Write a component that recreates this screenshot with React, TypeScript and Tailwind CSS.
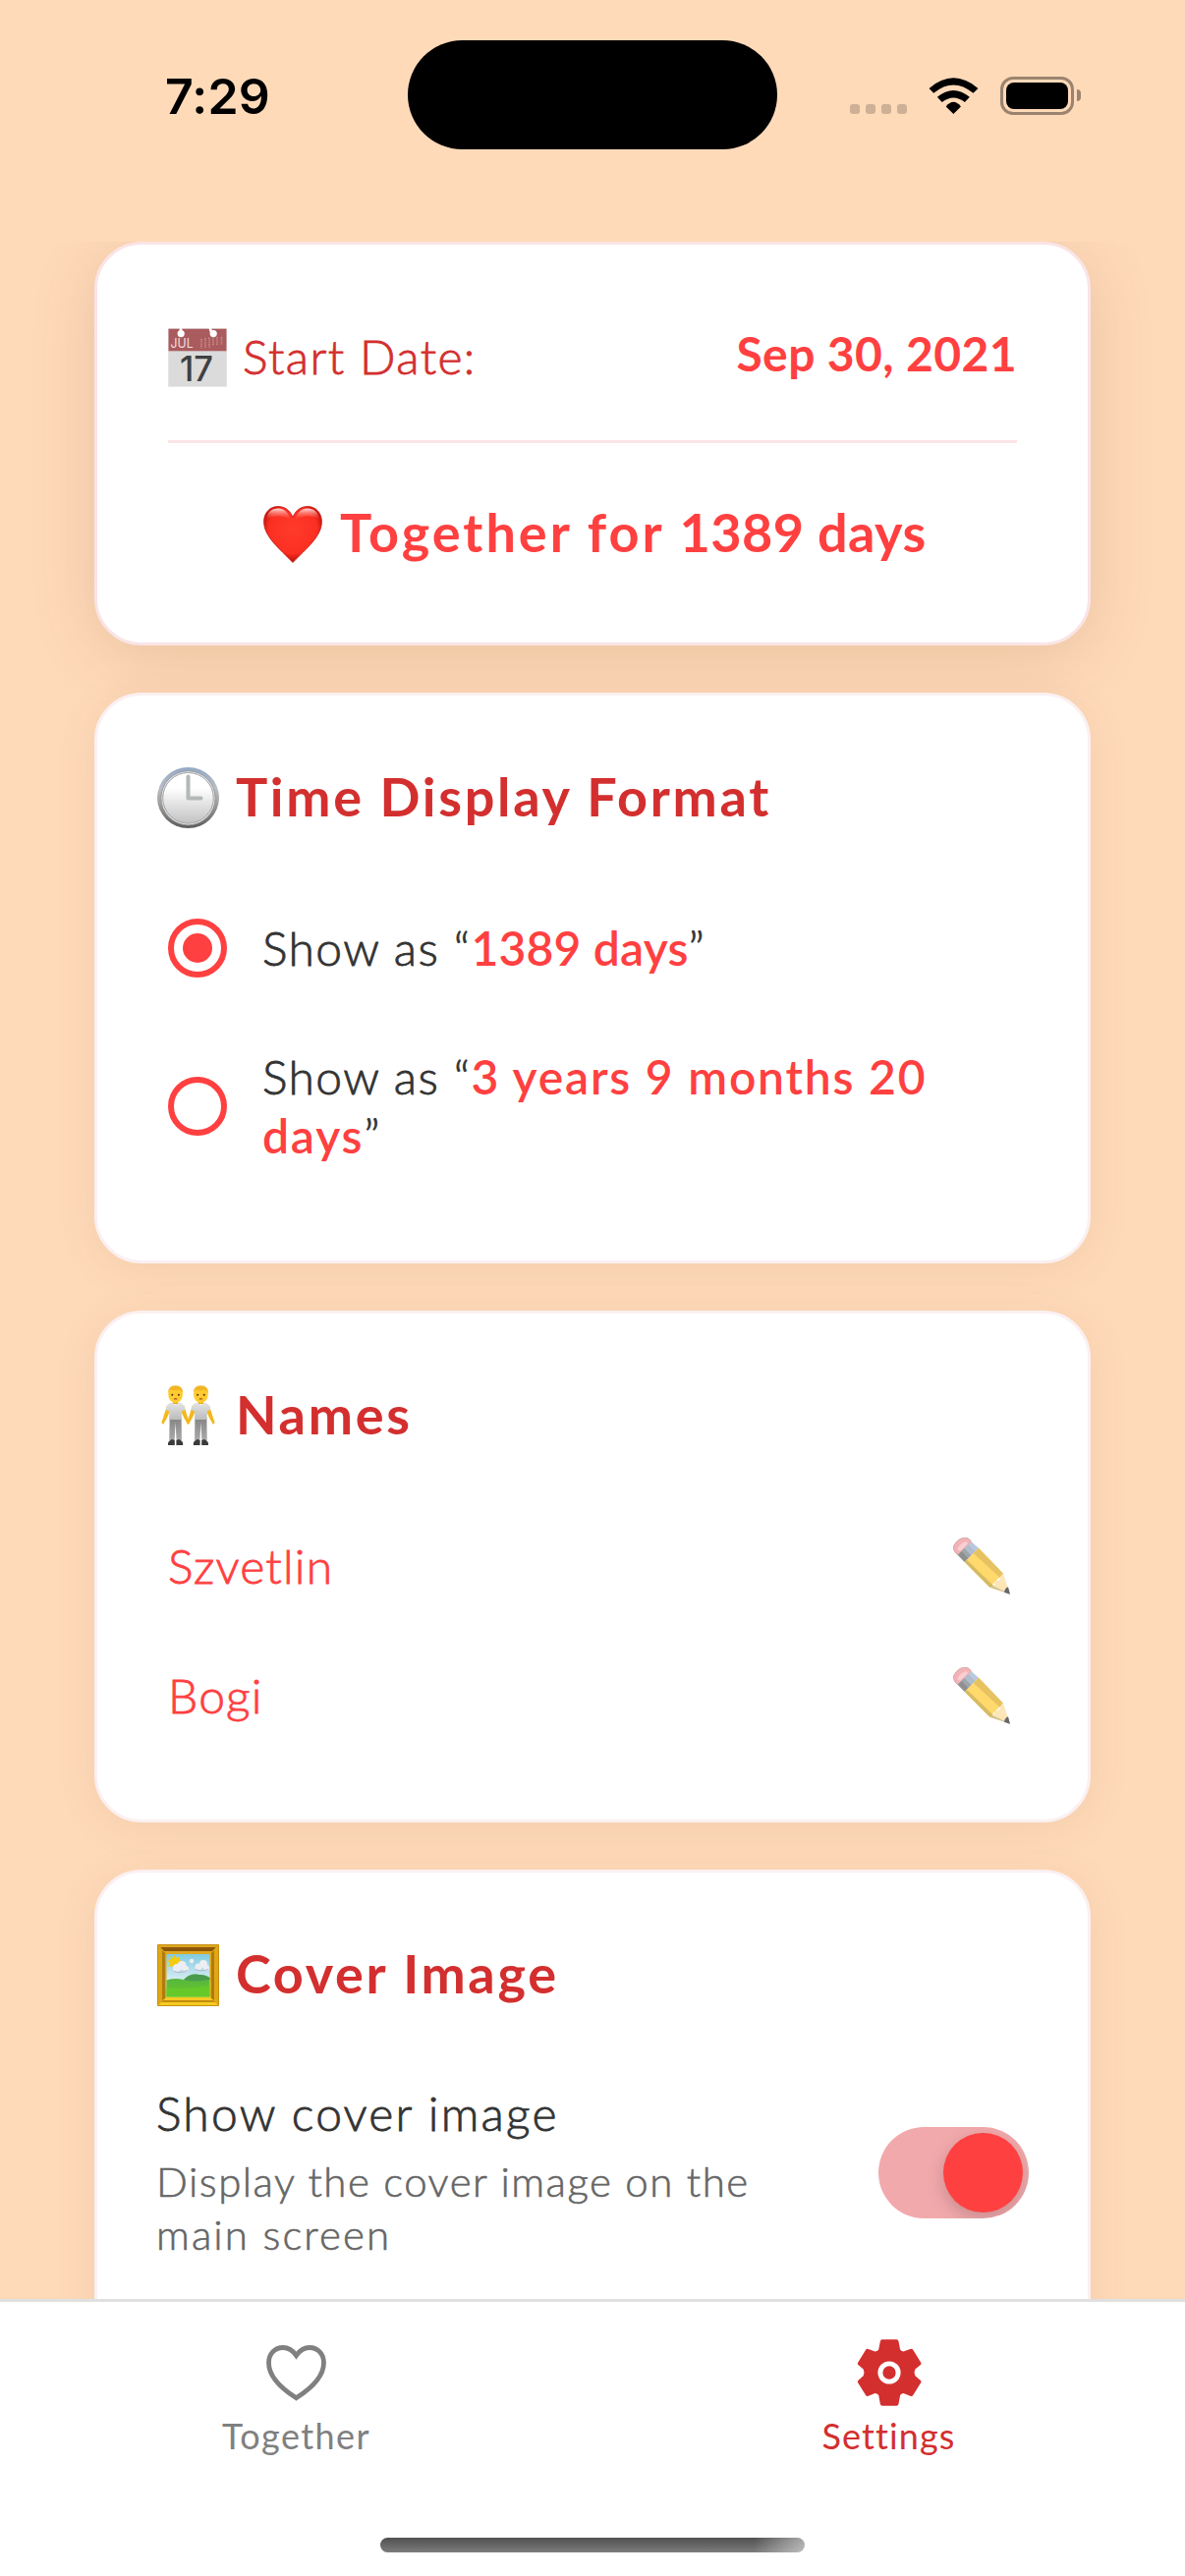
import type { ReactNode } from "react";

function CalendarIcon() {
  return (
    <svg viewBox="0 0 60 60" className="h-[60px] w-[60px] shrink-0">
      <rect width="60" height="60" fill="#e9e9e9" />
      <rect x="0.7" y="23" width="58.6" height="36" fill="#dbdbdb" />
      <rect x="0.5" y="0.7" width="59" height="22.6" fill="#aa5b5d" />
      <path d="M13 0V5M43 0Q43 4 46 5" stroke="#fff" strokeWidth="2.6" fill="none" />
      <circle cx="13.2" cy="5.6" r="3.6" fill="#fff" />
      <circle cx="46.2" cy="5.6" r="3.6" fill="#fff" />
      <path d="M34 11v9.5M38 10v10M42 9.5v10M46 9v9M50 9v8.5M54.500 9v7.500" stroke="#c98f90" strokeWidth="1.6" strokeDasharray="1.4 0.8" />
      <text x="2.600" y="20.300" fontFamily="Inter, sans-serif" fontSize="13.400" fontWeight="400" fill="#f3dede" textLength="23" lengthAdjust="spacingAndGlyphs">JUL</text>
      <text x="12" y="53.500" fontFamily="Inter, sans-serif" fontSize="35" fontWeight="500" fill="#3f4041" textLength="34" lengthAdjust="spacingAndGlyphs">17</text>
    </svg>
  );
}

function RedHeartIcon() {
  return (
    <svg viewBox="0 0 60 58" className="h-[58px] w-[60px] shrink-0">
      <defs>
        <radialGradient id="heartBody" cx="0.5" cy="0.42" r="0.58">
          <stop offset="0" stopColor="#ff3b2c" />
          <stop offset="0.72" stopColor="#fb2f22" />
          <stop offset="1" stopColor="#b80d08" />
        </radialGradient>
        <linearGradient id="heartShine" x1="0" y1="0" x2="0" y2="1">
          <stop offset="0" stopColor="#fff" stopOpacity="0.85" />
          <stop offset="1" stopColor="#ff6a5c" stopOpacity="0" />
        </linearGradient>
      </defs>
      <path d="M30 11.500C27 4 21.500 0.500 15 0.500C6.500 0.500 0.600 7 0.600 16C0.600 31 16 43 30 57.500C44 43 59.400 31 59.400 16C59.400 7 53.500 0.500 45 0.500C38.500 0.500 33 4 30 11.500Z" fill="url(#heartBody)" stroke="#c0150e" strokeWidth="0.8" />
      <path d="M15 2.500C8.500 2.500 4 6.500 3.500 13Q15 7 27.500 14C25.500 6.500 21.500 2.500 15 2.500ZM45 2.500C51.500 2.500 56 6.500 56.500 13Q45 7 32.500 14C34.500 6.500 38.500 2.500 45 2.500Z" fill="url(#heartShine)" />
    </svg>
  );
}

function ClockIcon() {
  return (
    <svg viewBox="0 0 63 62" className="h-[62px] w-[63px] shrink-0">
      <defs>
        <linearGradient id="clockRim" x1="0" y1="0" x2="0" y2="1">
          <stop offset="0" stopColor="#94a8c6" />
          <stop offset="0.35" stopColor="#b9bec6" />
          <stop offset="0.6" stopColor="#a39c96" />
          <stop offset="1" stopColor="#5c5c5c" />
        </linearGradient>
        <linearGradient id="clockFace" x1="0" y1="0" x2="0" y2="1">
          <stop offset="0.3" stopColor="#fff" />
          <stop offset="1" stopColor="#c2c2c2" />
        </linearGradient>
      </defs>
      <ellipse cx="31.500" cy="31" rx="31.500" ry="31" fill="url(#clockRim)" />
      <circle cx="31.500" cy="31.300" r="27.600" fill="#e4e4e4" stroke="#8b9097" strokeWidth="0.8" />
      <circle cx="31.500" cy="31.300" r="25.800" fill="url(#clockFace)" stroke="#a2a4a8" strokeWidth="1" />
      <path d="M31.500 9.500V31.500H44.500" fill="none" stroke="#b4b8b8" strokeWidth="4" strokeLinecap="round" strokeLinejoin="round" />
    </svg>
  );
}

function Person() {
  return (
    <g>
      <path d="M-8.500 20Q-10.500 27 -14.200 38L-12.500 40Q-8 33 -5.500 26ZM8.500 20Q10.500 27 14.200 38L12.500 40Q8 33 5.500 26Z" fill="#f4b81c" />
      <path d="M-6 33H6L6.300 56H1L0 38L-1 56H-6.300Z" fill="url(#trousers)" />
      <path d="M-7.500 61Q-8.500 57 -3.500 55L-0.800 56V61ZM7.500 61Q8.500 57 3.500 55L0.800 56V61Z" fill="#3b3b3b" />
      <path d="M-4 17.500Q-9.500 19 -10 25L-6.300 26.500V35H6.300V26.500L10 25Q9.500 19 4 17.500L0 20Z" fill="url(#shirt)" />
      <rect x="-2.500" y="14" width="5" height="5" fill="#eba915" />
      <ellipse cx="0" cy="9.500" rx="7.300" ry="8.500" fill="#ffcb2e" />
      <path d="M-7.700 9Q-8 0.200 0 0.200Q8 0.200 7.700 9Q6.500 5 3 4.700Q-2 6 -5.500 4.500Q-7 6 -7.700 9Z" fill="#f2b525" />
      <circle cx="-3.300" cy="9.700" r="1" fill="#4d3215" />
      <circle cx="3.300" cy="9.700" r="1" fill="#4d3215" />
      <path d="M-1.500 14.300Q0 12.900 1.500 14.300" stroke="#a8501c" strokeWidth="1.100" fill="none" />
    </g>
  );
}

function PeopleIcon() {
  return (
    <svg viewBox="0 0 55 62" className="mx-1 h-[62px] w-[55px] shrink-0">
      <defs>
        <linearGradient id="trousers" x1="0" y1="0" x2="0" y2="1">
          <stop offset="0" stopColor="#858585" />
          <stop offset="1" stopColor="#a9a9a9" />
        </linearGradient>
        <linearGradient id="shirt" x1="0" y1="0" x2="0" y2="1">
          <stop offset="0" stopColor="#e4e4e4" />
          <stop offset="1" stopColor="#bcbcbc" />
        </linearGradient>
      </defs>
      <g transform="translate(14.600 0)"><Person /></g>
      <g transform="translate(40.400 0)"><Person /></g>
    </svg>
  );
}

function PencilIcon() {
  return (
    <svg viewBox="0 0 174 174" className="h-[58px] w-[58px] shrink-0">
      <path d="M14 53Q-4 38 3 23Q14 4 34 0Q48 -1 56 13Z" fill="#f3b3b6" stroke="#bd9597" strokeWidth="2" />
      <path d="M14 33Q22 18 38 12Q46 14 44 20L22 41Q14 41 14 33Z" fill="#f9ced0" />
      <path d="M14 53L35 33L56 54L35 75Z" fill="#8f8f8f" />
      <path d="M35 33L56 13L78 32L56 54Z" fill="#b9c9dd" />
      <path d="M26 42L46 22L67 42L46 64Z" fill="#a9b4c0" opacity="0.6" />
      <path d="M35 75L78 32L153 110L128 135L112 152Z" fill="#ffd96b" />
      <path d="M62 48L78 32L153 110L143 122Z" fill="#e6c262" />
      <path d="M35 75L42 68L124 148L112 152Z" fill="#d6bb64" />
      <path d="M112 152Q124 151 126 142Q126 133 133 132Q146 130 145 121Q147 111 153 110L174 173Z" fill="#fce6b8" />
      <path d="M112 152L122 148L160 166L174 173Z" fill="#d3c092" />
      <path d="M168 151L174 173L156 167Q158 155 168 151Z" fill="#63686e" />
    </svg>
  );
}

function FrameIcon() {
  return (
    <svg viewBox="0 0 63 63" className="h-[63px] w-[63px] shrink-0">
      <defs>
        <linearGradient id="sky" x1="0" y1="0" x2="0" y2="1">
          <stop offset="0" stopColor="#7fcbe0" />
          <stop offset="0.7" stopColor="#e6f2f6" />
        </linearGradient>
        <linearGradient id="hill" x1="0" y1="0" x2="0" y2="1">
          <stop offset="0" stopColor="#52b548" />
          <stop offset="1" stopColor="#68c524" />
        </linearGradient>
      </defs>
      <rect width="63" height="63" rx="1" fill="#c9900f" />
      <path d="M1 1H62L53 10H10Z" fill="#dfa81e" />
      <path d="M3 3H60L56 7H7Z" fill="#8b560b" />
      <path d="M1 1L10 10V53L1 62Z" fill="#dda617" />
      <path d="M62 1L53 10V53L62 62Z" fill="#e0a716" />
      <path d="M1 62L10 53H53L62 62Z" fill="#f7cb22" />
      <path d="M4 59L6 57H57L59 59Z" fill="#c18c0e" />
      <path d="M5 6L8 9V55L5 57ZM58 6L55 9V55L58 57Z" fill="#a26b0c" opacity="0.75" />
      <rect x="9.500" y="10" width="44" height="43.500" fill="url(#sky)" />
      <path d="M17.500 11L19.500 14L23 12L23 16L26 18L23 20L23 24L19 22L17 25L15 22L11 23L13 19L10.500 17L14 15L13 12L16 14Z" fill="#f4cb0d" />
      <g fill="#eceef3">
        <circle cx="20" cy="24" r="4" />
        <circle cx="25" cy="21.500" r="4.500" />
        <circle cx="29" cy="25" r="3" />
        <circle cx="42" cy="23" r="3.500" />
        <circle cx="47" cy="20" r="4" />
        <circle cx="50" cy="24" r="3" />
        <circle cx="35" cy="17" r="2.300" />
      </g>
      <path d="M17 27.500Q24 30 31 26.500M39 25.500Q45 28 52 25.500" stroke="#b7bccb" strokeWidth="1.200" fill="none" />
      <path d="M9.500 36.500Q18 34 27 36Q34 29 43 31Q49 31 53.500 34V53.500H9.500Z" fill="url(#hill)" />
      <path d="M27 36Q35 39 53.500 36V34Q49 31 43 31Q34 29 27 36Z" fill="#4a9c4d" />
      <path d="M9.500 44Q25 47 53.500 42V53.500H9.500Z" fill="#67c929" />
    </svg>
  );
}

function GearIcon() {
  return (
    <svg viewBox="34 31 199 205" className="h-[68px] w-[66px]">
      <path fill="#d32f2f" d="M112 32H156Q161 32 162 37L167 63Q169 68 177 69L198 61Q204 59 207 64L231 103Q233 107 229 110L213 123Q208 133 213 143L229 157Q233 160 231 164L207 202Q204 207 198 205L177 197Q169 198 167 203L162 230Q161 235 156 235H112Q107 235 106 230L101 203Q99 198 90 197L69 205Q64 207 61 202L37 164Q35 160 39 157L54 143Q59 133 54 123L39 110Q35 107 37 103L61 64Q64 59 69 61L90 69Q99 68 101 63L106 37Q107 32 112 32Z" />
      <circle cx="133.500" cy="133.500" r="27.500" fill="none" stroke="#fff" strokeWidth="15" />
    </svg>
  );
}

function HeartOutlineIcon() {
  return (
    <svg viewBox="0 0 61 57" className="h-[57px] w-[61px]" fill="none" stroke="#808080" strokeWidth="4.800" strokeLinejoin="miter">
      <path d="M30.500 10.500C27 5.500 22 2.500 17 2.500C8.500 2.500 2.500 9 2.500 18C2.500 31 12 42 30.500 53.800C49 42 58.500 31 58.500 18C58.500 9 52.500 2.500 44 2.500C39 2.500 34 5.500 30.500 10.500Z" />
    </svg>
  );
}

function StatusBar() {
  return (
    <header className="flex h-[246px] shrink-0 items-start">
      <div className="w-[415px] pt-[68px] pl-[168px] font-[Inter,sans-serif] text-[50px] leading-[60px] font-semibold tracking-[0.2px] text-black">7:29</div>
      <div className="mt-[41px] h-[111px] w-[376px] rounded-full bg-black" />
      <div className="mt-[78px] ml-[74px] flex h-[39px] items-start">
        <div className="mt-7 flex gap-1.5">
          {[0, 1, 2, 3].map((dot) => (
            <span key={dot} className="h-2.5 w-2.5 rounded-[3px] bg-[#cdb096]" />
          ))}
        </div>
        <svg viewBox="286 56 151 112" className="mt-px ml-[22px] h-[37px] w-[51px]">
          <path d="M286 89Q361 25 437 89L422 104Q361 53 300 104Z" />
          <path d="M311 116Q361 74 411 116L396 132Q361 104 326 132Z" />
          <path d="M338 145Q361 117 384 145L361 168Z" />
        </svg>
        <div className="ml-[22px] h-[39px] w-[75px] rounded-[13px] border-[3px] border-[#9b846f] p-[3px]">
          <div className="h-full w-full rounded-[8px] bg-black" />
        </div>
        <div className="mt-[13px] ml-[3px] h-3 w-1 rounded-r-full bg-[#9b846f]" />
      </div>
    </header>
  );
}

function Card({ title, icon, size, children }: { title: string; icon: ReactNode; size: string; children: ReactNode }) {
  return (
    <section className={`shrink-0 rounded-[48px] border-[3px] border-[#fbf0f1] bg-white px-[61px] pt-[70px] shadow-[0_6px_44px_rgba(90,50,0,0.08)] ${size}`}>
      <div className="flex h-[66px] items-start">
        <div className="mt-[3px] flex">{icon}</div>
        <h2 className="ml-[17px] text-[54px] leading-[66px] font-bold tracking-[2.7px] whitespace-nowrap text-[#d32f2f]">{title}</h2>
      </div>
      {children}
    </section>
  );
}

function Radio({ checked }: { checked?: boolean }) {
  return (
    <span className="flex h-[60px] w-[60px] shrink-0 items-center justify-center rounded-full border-[6px] border-[#ff4040]">
      {checked && <span className="h-[30px] w-[30px] rounded-full bg-[#ff4040]" />}
    </span>
  );
}

function NameRow({ name }: { name: string }) {
  return (
    <div className="flex h-[60px] items-start justify-between pr-[18px] pl-[11px]">
      <span className="text-[48px] leading-[60px] font-light tracking-[1.200px] text-[#ff4040] [-webkit-text-stroke:0.8px]">{name}</span>
      <span className="mt-px"><PencilIcon /></span>
    </div>
  );
}

export default function App() {
  return (
    <div className="flex h-[2622px] w-[1206px] flex-col overflow-hidden bg-[#ffdab9] font-[Lato,sans-serif]">
      <StatusBar />

      <main className="flex min-h-0 flex-1 flex-col gap-12 overflow-hidden px-24">
        <section className="h-[411px] shrink-0 rounded-[48px] border-[3px] border-[#fae4e6] bg-white px-[72px] shadow-[0_12px_68px_rgba(90,50,0,0.14)]">
          <div className="flex h-[202px] items-start justify-between border-b-[3px] border-[#fae4e6] pt-[81px]">
            <div className="flex items-start">
              <div className="mt-1 flex"><CalendarIcon /></div>
              <span className="mt-[3px] ml-4 text-[48px] leading-[60px] font-light tracking-[1.400px] text-[#d32f2f] [-webkit-text-stroke:0.8px]">Start Date:</span>
            </div>
            <span className="text-[48px] leading-[60px] font-bold tracking-[0.4px] text-[#ff4040]">Sep 30, 2021</span>
          </div>
          <div className="flex items-start pt-[58px] pl-[97px]">
            <div className="mt-1.5 flex"><RedHeartIcon /></div>
            <p className="ml-[18px] text-[54px] leading-[66px] font-bold whitespace-nowrap text-[#ff4040]">
              <span className="tracking-[3px]">Together for </span>
              <span className="tracking-[0.4px]">1389 days</span>
            </p>
          </div>
        </section>

        <Card title="Time Display Format" icon={<ClockIcon />} size="h-[581px]">
          <div className="mt-[91px] flex items-center pl-[11px]">
            <Radio checked />
            <p className="ml-[36px] text-[48px] leading-[60px] font-light whitespace-nowrap text-[#333]">
              <span className="tracking-[1.400px] [-webkit-text-stroke:0.8px]">Show as “</span>
              <span className="font-semibold tracking-[0.2px] text-[#ff4040]">1389 days</span>
              <span className="[-webkit-text-stroke:0.8px]">”</span>
            </p>
          </div>
          <div className="mt-[71px] flex items-center pl-[11px]">
            <Radio />
            <p className="ml-[36px] text-[48px] leading-[60px] font-light whitespace-nowrap text-[#333]">
              <span className="tracking-[1.400px] [-webkit-text-stroke:0.8px]">Show as “</span>
              <span className="font-semibold tracking-[1.800px] text-[#ff4040]">3 years 9 months 20<br />days</span>
              <span className="[-webkit-text-stroke:0.8px]">”</span>
            </p>
          </div>
        </Card>

        <Card title="Names" icon={<PeopleIcon />} size="h-[521px]">
          <div className="mt-[91px] flex flex-col gap-[72px]">
            <NameRow name="Szvetlin" />
            <NameRow name="Bogi" />
          </div>
        </Card>

        <Card title="Cover Image" icon={<FrameIcon />} size="h-[560px]">
          <div className="mt-[79px] flex items-center justify-between">
            <div className="text-[#333] [-webkit-text-stroke:0.8px]">
              <p className="-ml-px text-[48px] leading-[60px] font-light tracking-[2.200px]">Show cover image</p>
              <p className="-ml-px mt-3 text-[42px] leading-[54px] font-light tracking-[1.500px] text-[#666] [-webkit-text-stroke:0.6px]">
                Display the cover image on the
                <br />
                <span className="tracking-[2.100px]">main screen</span>
              </p>
            </div>
            <div className="-mr-px flex h-[93px] w-[153px] items-center justify-end overflow-hidden rounded-full bg-[#f2a9ac] pr-1.5">
              <span className="h-[81px] w-[81px] rounded-full bg-[#ff4040] shadow-[0_6px_18px_rgba(0,0,0,0.18)]" />
            </div>
          </div>
        </Card>
      </main>

      <nav className="flex h-[282px] shrink-0 flex-col items-center border-t-[3px] border-[#e0e0e0] bg-white pt-8">
        <div className="flex w-full text-[36px] leading-[48px]">
          <div className="flex flex-1 flex-col items-center text-[#808080]">
            <span className="flex h-20 items-center"><HeartOutlineIcon /></span>
            <span className="tracking-[1.400px]">Together</span>
          </div>
          <div className="flex flex-1 flex-col items-center text-[#d32f2f]">
            <span className="flex h-20 items-center"><GearIcon /></span>
            <span className="tracking-[1.100px]">Settings</span>
          </div>
        </div>
        <div className="mt-20 h-[15px] w-[432px] rounded-full bg-[linear-gradient(to_right,transparent_88%,rgba(255,255,255,0.5)),linear-gradient(#505050,#7c7c7c)]" />
      </nav>
    </div>
  );
}
